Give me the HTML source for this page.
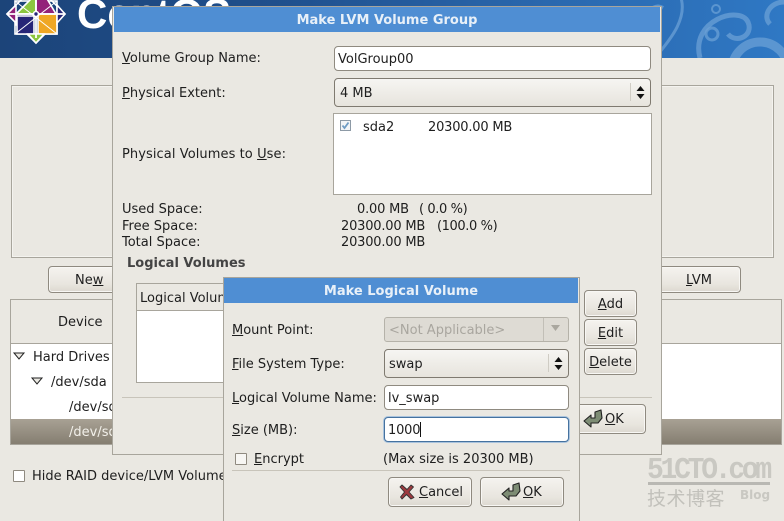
<!DOCTYPE html>
<html style="overflow:hidden;width:784px;height:521px"><head><meta charset="utf-8">
<style>
html,body{margin:0;padding:0}
body{width:784px;height:521px;overflow:hidden;position:relative;background:#eae8e2;font-family:"DejaVu Sans","Noto Sans CJK SC",sans-serif;font-size:13px;color:#1e1e1e}
div,span.a{position:absolute;box-sizing:border-box}
.t{white-space:pre;line-height:16px;height:16px;margin-top:1px}
.n{letter-spacing:-.2px}
u{text-decoration:underline}
.btn{border:1px solid #8f8a80;border-radius:4px;background:linear-gradient(#f5f3ef,#e8e5de 70%,#dcd8d0);text-align:center;line-height:27px;box-shadow:inset 0 0 0 1px #f8f7f4}
.entry{background:#fff;border:1px solid #8f8a80;border-radius:4px;line-height:25px;padding-left:3px}
.combo{border:1px solid #7f7a70;border-radius:4px;background:linear-gradient(#f6f5f2,#e7e4dd);padding-left:5px}
.dlg{background:#eae8e2;border:1px solid #a8a59c}
.title{background:#4f8ed3;color:#e8f0f8;font-weight:bold;text-align:center;line-height:27px}
.sep{height:1px;background:#c8c4ba}
</style></head><body>

<!-- banner -->
<div style="left:0;top:0;width:784px;height:58px;background:linear-gradient(90deg,#1c4479 0,#1f4f8c 35%,#2a68ae 70%,#2f78c4 100%);overflow:hidden">
<svg width="784" height="58" style="position:absolute;left:0;top:0">
<g fill="none" stroke="#6ba0d6" stroke-opacity=".75" stroke-width="5">
<circle cx="760" cy="70" r="28" stroke-width="9"/>
<path d="M700 58C690 20 740 5 748 22c6 14-12 22-20 12"/>
<path d="M680 -5C690 20 665 45 655 58" stroke-width="3"/>
<path d="M663 8c-14-8-22 18-10 22" stroke-width="4"/>
<circle cx="712" cy="34" r="6" stroke-width="3"/>
<circle cx="716" cy="9" r="4" stroke-width="2"/>
<path d="M784 2c-14 0-22 14-14 22" stroke-width="5"/>
</g>
<g stroke="#fff" stroke-width="1.6">
<rect x="15" y="1" width="42" height="33" fill="none"/>
<path d="M36 43L7 14 36 -15 65 14Z" fill="none"/>
<path d="M36 -6L36 14 16 14 26 4Z" fill="#8cc63f"/>
<path d="M36 14L56 14 46 -3 36 -6Z" fill="#932279"/>
<path d="M16 14L36 14 26 25 16 25Z" fill="#262577"/>
<path d="M7 14L16 5 16 23Z" fill="#932279"/>
<path d="M36 14H57L57 34H38V16Z" fill="#efa724"/>
<path d="M17 16H34V34H17Z" fill="#262577"/>
<path d="M36 43L28 34 44 34Z" fill="#8cc63f"/>
<path d="M65 14L57 5 57 23Z" fill="#262577"/>
<path d="M15 1L57 34M57 1L15 34" fill="none" stroke-width="1"/>
<path d="M36 -10V38M8 14H64" fill="none" stroke-width="1.8"/>
<circle cx="36" cy="14" r="2.5" fill="#262577"/>
</g>
</svg>
<span class="a" style="left:77px;top:-7px;font:bold 42px/42px 'Liberation Sans',sans-serif;color:#fff;white-space:pre">CentOS</span>
</div>

<!-- main window frames -->
<div style="left:11px;top:85px;width:763px;height:173px;border:1px solid #a8a59c;box-shadow:inset 0 0 0 1px #f4f3ef"></div>
<div class="btn" style="left:48px;top:266px;width:120px;height:27px"></div>
<div class="t" style="left:75px;top:272px">Ne<u>w</u></div>
<div class="btn" style="left:620px;top:266px;width:121px;height:27px"></div>
<div class="t" style="left:686px;top:272px"><u>L</u>VM</div>
<div style="left:10px;top:299px;width:772px;height:146px;border:1px solid #a8a59c;background:#fff"></div>
<div style="left:11px;top:300px;width:770px;height:44px;background:#eae8e2;border-bottom:1px solid #a8a59c"></div>
<div class="t" style="left:58px;top:314px">Device</div>
<svg style="position:absolute;left:12px;top:351px" width="40" height="36"><path d="M2 2h10l-5 6z M20 27h10l-5 6z" fill="#eae8e2" stroke="#222" stroke-width="1"/></svg>
<div class="t" style="left:33px;top:349px">Hard Drives</div>
<div class="t" style="left:51px;top:374px">/dev/sda</div>
<div class="t" style="left:69px;top:399px">/dev/sda1</div>
<div style="left:11px;top:419px;width:770px;height:25px;background:linear-gradient(#a8a194,#857e71)"></div>
<div class="t" style="left:69px;top:424px;color:#f2f0ea">/dev/sda2</div>
<div style="left:13px;top:470px;width:12px;height:12px;background:#fff;border:1px solid #8f8a80;border-radius:1px"></div>
<div class="t" style="left:32px;top:468px">Hide RAID device/LVM Volume Group members</div>

<!-- watermark -->
<div class="t" style="left:647px;top:456px;width:125px;height:28px;margin:0;font:bold 28px/28px 'Liberation Mono',monospace;color:#c9c8c2;letter-spacing:-3.25px;transform-origin:0 0;transform:scaleY(1.1)">51CTO.com</div>
<div style="left:648px;top:482px;width:122px;height:3px;background:#b9b8b3"></div>
<div class="t" style="left:647px;top:487px;height:22px;margin:0;font:normal 19px/22px 'Noto Sans CJK SC',sans-serif;color:#c2c1bb;letter-spacing:.5px">技术博客</div>
<div class="t" style="left:740px;top:486px;font:bold 12px/16px 'DejaVu Sans',sans-serif;color:#c9c8c2">Blog</div>

<!-- LVM group dialog -->
<div class="dlg" style="left:112px;top:6px;width:550px;height:449px"></div>
<div class="title" style="left:114px;top:7px;width:546px;height:25px">Make LVM Volume Group</div>
<div class="t" style="left:122px;top:50px"><u>V</u>olume Group Name:</div>
<div class="entry" style="left:334px;top:46px;width:317px;height:25px">VolGroup00</div>
<div class="t" style="left:122px;top:85px"><u>P</u>hysical Extent:</div>
<div class="combo" style="left:334px;top:78px;width:317px;height:29px;line-height:29px">4 MB</div>
<div style="left:630px;top:83px;width:1px;height:18px;background:#cfccc4"></div>
<svg style="position:absolute;left:636px;top:86px" width="9" height="13"><path d="M4.5 0L8.5 5H.5zM4.5 13L8.5 8H.5z" fill="#111"/></svg>
<div class="t" style="left:122px;top:146px;letter-spacing:.08px">Physical Volumes to <u>U</u>se:</div>
<div style="left:333px;top:113px;width:319px;height:82px;background:#fff;border:1px solid #a8a59c"></div>
<div style="left:340px;top:120px;width:11px;height:11px;background:#f3f5f7;border:1px solid #8d9aa6"></div>
<svg style="position:absolute;left:340px;top:120px" width="11" height="11"><path d="M2.5 5.5L4.5 8 8.5 2.5" fill="none" stroke="#6f9cc4" stroke-width="1.8"/></svg>
<div class="t" style="left:363px;top:119px">sda2</div>
<div class="t n" style="left:428px;top:119px">20300.00 MB</div>
<div class="t" style="left:122px;top:201px">Used Space:</div>
<div class="t" style="left:122px;top:218px">Free Space:</div>
<div class="t" style="left:122px;top:234px">Total Space:</div>
<div class="t n" style="left:357px;top:201px">0.00 MB</div>
<div class="t" style="left:419px;top:201px;letter-spacing:-.4px">( 0.0 %)</div>
<div class="t n" style="left:341px;top:218px">20300.00 MB</div>
<div class="t" style="left:437px;top:218px;letter-spacing:-.4px">(100.0 %)</div>
<div class="t n" style="left:341px;top:234px">20300.00 MB</div>
<div class="t" style="left:127px;top:255px;font-weight:bold;color:#444">Logical Volumes</div>
<div style="left:136px;top:283px;width:100px;height:100px;background:#fff;border:1px solid #a8a59c"></div>
<div style="left:137px;top:284px;width:99px;height:27px;background:#eae8e2;border-bottom:1px solid #a8a59c"></div>
<div class="t" style="left:140px;top:290px">Logical Volume Name</div>
<div class="sep" style="left:122px;top:397px;width:530px"></div>
<div class="btn" style="left:584px;top:290px;width:53px;height:27px"><u>A</u>dd</div>
<div class="btn" style="left:584px;top:319px;width:53px;height:27px"><u>E</u>dit</div>
<div class="btn" style="left:584px;top:348px;width:53px;height:27px"><u>D</u>elete</div>
<div class="btn" style="left:540px;top:404px;width:106px;height:30px"></div>
<svg style="position:absolute;left:583px;top:409px" width="20" height="19"><path d="M1 12L8 6V9L12 9V3L18 1 19 9 15 14H8V18Z" fill="#7d8c74" stroke="#222" stroke-width="1.1" stroke-linejoin="round"/></svg>
<div class="t" style="left:605px;top:411px"><u>O</u>K</div>

<!-- logical volume dialog -->
<div class="dlg" style="left:223px;top:277px;width:357px;height:244px;border-bottom:0"></div>
<div class="title" style="left:224px;top:278px;width:354px;height:25px">Make Logical Volume</div>
<div class="t" style="left:232px;top:322px"><u>M</u>ount Point:</div>
<div style="left:384px;top:317px;width:185px;height:25px;background:#dedbd4;border:1px solid #b5b2a9;border-radius:3px;color:#a9a69f;line-height:25px;padding-left:4px;white-space:pre">&lt;Not Applicable&gt;</div>
<div style="left:543px;top:318px;width:1px;height:23px;background:#c2bfb7"></div>
<svg style="position:absolute;left:551px;top:325px" width="10" height="7"><path d="M0 0H9L4.5 6Z" fill="#aaa79f"/></svg>
<div class="t" style="left:232px;top:356px"><u>F</u>ile System Type:</div>
<div class="combo" style="left:384px;top:349px;width:185px;height:29px;line-height:29px;padding-left:4px">swap</div>
<div style="left:548px;top:354px;width:1px;height:18px;background:#cfccc4"></div>
<svg style="position:absolute;left:554px;top:357px" width="9" height="13"><path d="M4.5 0L8.5 5H.5zM4.5 13L8.5 8H.5z" fill="#111"/></svg>
<div class="t" style="left:232px;top:390px"><u>L</u>ogical Volume Name:</div>
<div class="entry" style="left:384px;top:385px;width:185px;height:25px">lv_swap</div>
<div class="t" style="left:232px;top:422px"><u>S</u>ize (MB):</div>
<div class="entry n" style="left:384px;top:417px;width:185px;height:25px;border-color:#46729f;box-shadow:0 0 0 1px #a9c3dd">1000</div>
<div style="left:420px;top:422px;width:1px;height:15px;background:#111"></div>
<div style="left:235px;top:453px;width:12px;height:12px;background:#f7f6f3;border:1px solid #8f8a80;border-radius:1px"></div>
<div class="t" style="left:254px;top:451px"><u>E</u>ncrypt</div>
<div class="t" style="left:383px;top:451px">(Max size is 20300 MB)</div>
<div class="sep" style="left:232px;top:470px;width:338px"></div>
<div class="btn" style="left:388px;top:477px;width:84px;height:30px"></div>
<svg style="position:absolute;left:399px;top:484px" width="16" height="16"><path d="M3 1L8 5.5 12 1 14.5 3 10 8 15 13.5 12 15 7.5 10.5 3 15 1.5 13 5.5 8 1 3Z" fill="#9c3a3f" stroke="#333" stroke-width=".9" stroke-linejoin="round"/></svg>
<div class="t" style="left:419px;top:484px"><u>C</u>ancel</div>
<div class="btn" style="left:480px;top:477px;width:84px;height:30px"></div>
<svg style="position:absolute;left:501px;top:482px" width="20" height="19"><path d="M1 12L8 6V9L12 9V3L18 1 19 9 15 14H8V18Z" fill="#7d8c74" stroke="#222" stroke-width="1.1" stroke-linejoin="round"/></svg>
<div class="t" style="left:523px;top:484px"><u>O</u>K</div>
</body></html>
